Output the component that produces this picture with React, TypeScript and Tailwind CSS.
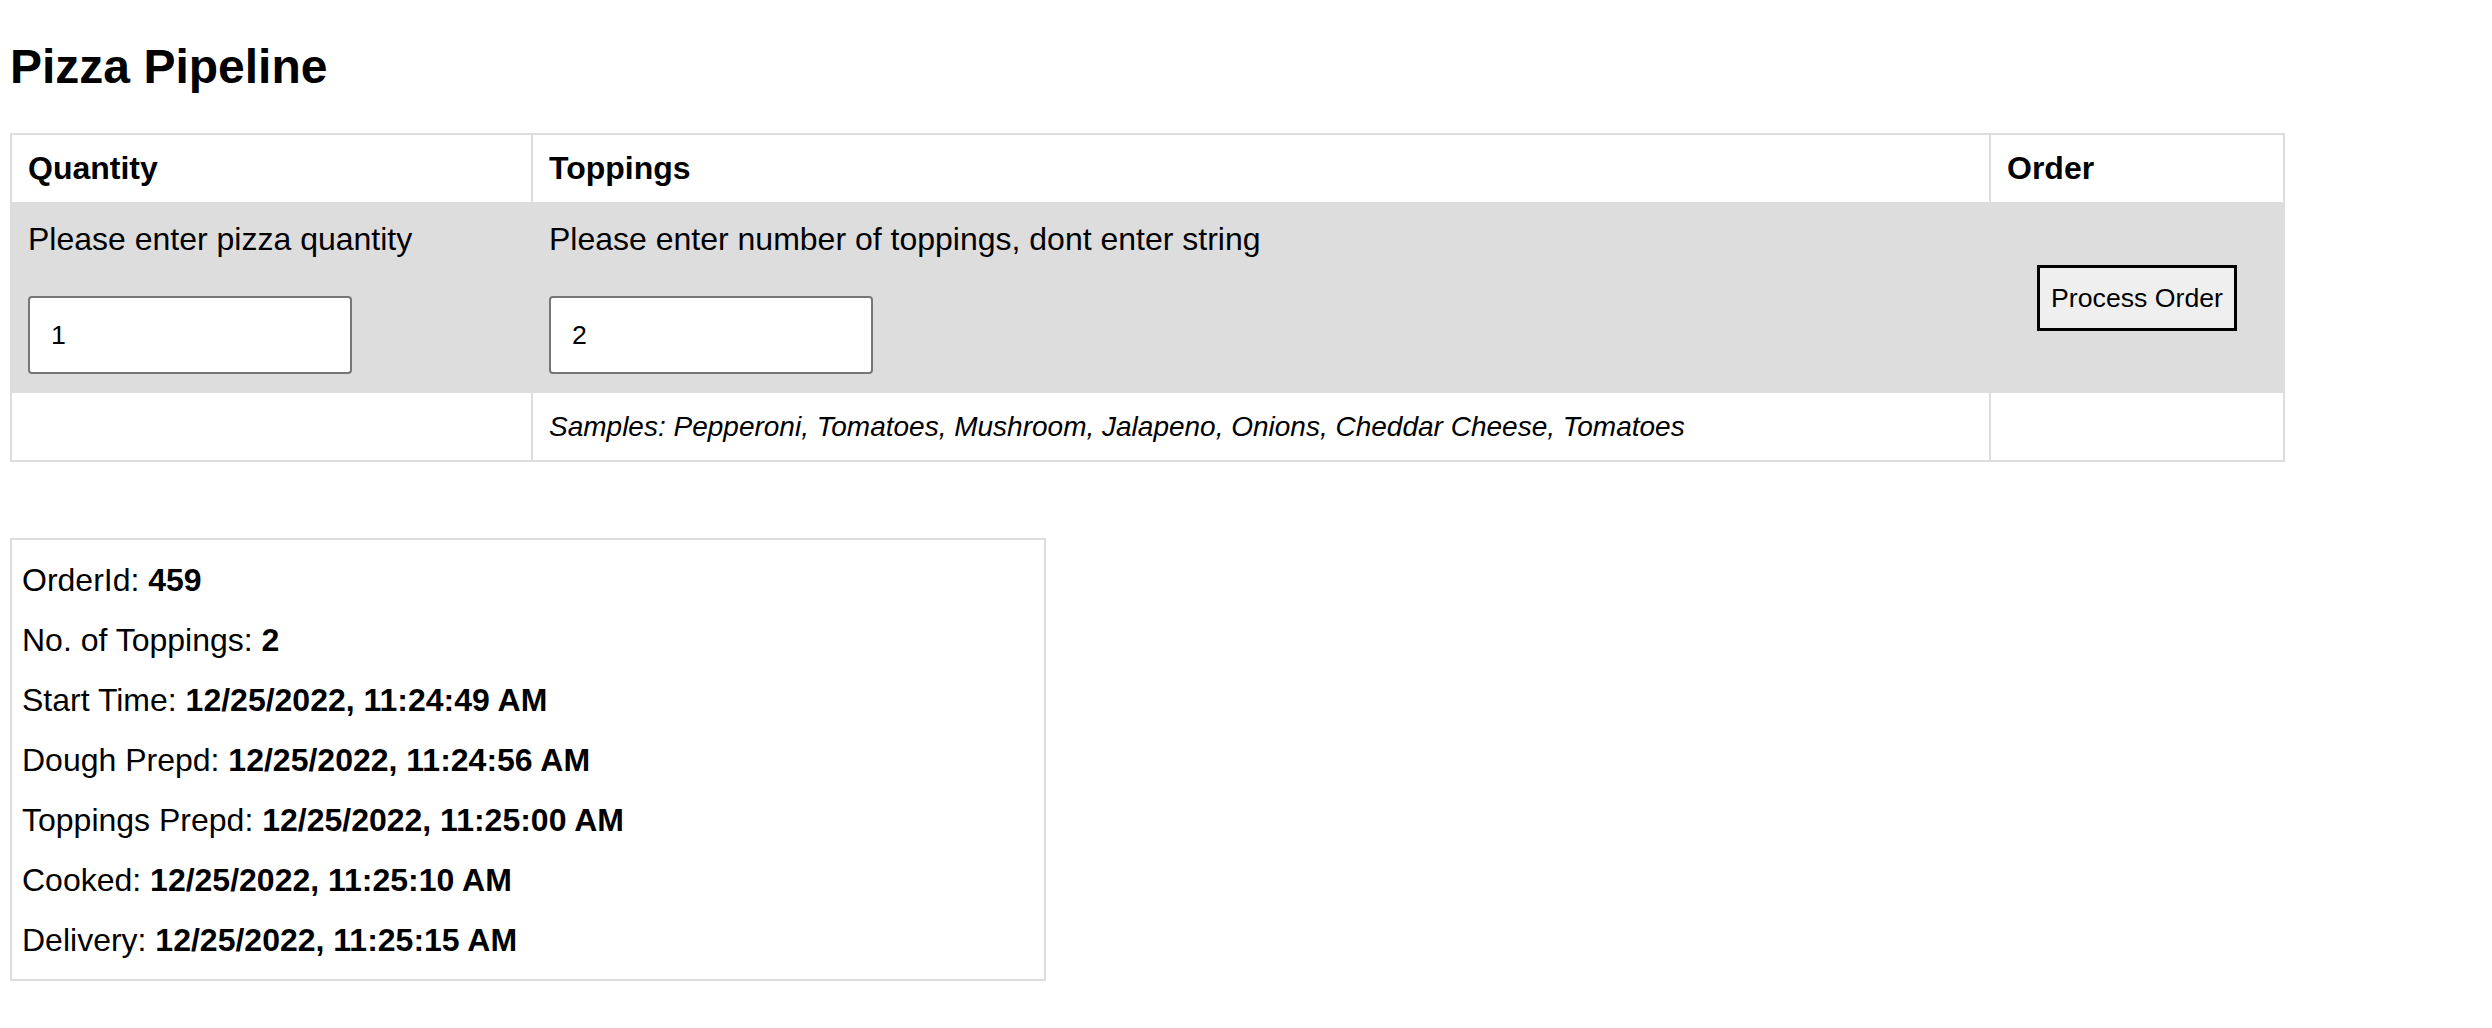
import { useState } from "react";

// Pizza Pipeline — order form table on top, timeline of the last order below.

const FONT = "font-['Liberation_Sans',Arial,sans-serif]";

const SAMPLES =
  "Samples: Pepperoni, Tomatoes, Mushroom, Jalapeno, Onions, Cheddar Cheese, Tomatoes";

type Step = { label: string; value: string };

const lastOrder: Step[] = [
  { label: "OrderId", value: "459" },
  { label: "No. of Toppings", value: "2" },
  { label: "Start Time", value: "12/25/2022, 11:24:49 AM" },
  { label: "Dough Prepd", value: "12/25/2022, 11:24:56 AM" },
  { label: "Toppings Prepd", value: "12/25/2022, 11:25:00 AM" },
  { label: "Cooked", value: "12/25/2022, 11:25:10 AM" },
  { label: "Delivery", value: "12/25/2022, 11:25:15 AM" },
];

function NumberField({
  value,
  onChange,
}: {
  value: string;
  onChange: (v: string) => void;
}) {
  return (
    <input
      type="text"
      value={value}
      onChange={(e) => onChange(e.target.value)}
      className={`${FONT} mt-[38px] block h-[78px] w-[324px] rounded-[4px] border-2 border-[#767676] bg-white pl-[21px] text-[26.67px] text-black outline-none`}
    />
  );
}

export default function App() {
  const [quantity, setQuantity] = useState("1");
  const [toppings, setToppings] = useState("2");

  return (
    <div className={`${FONT} min-h-screen bg-white px-[10px] pt-[39px] text-black`}>
      <h1 className="text-[48px] font-bold leading-[55px]">Pizza Pipeline</h1>

      <div className="mt-[39px] grid w-[2275px] grid-cols-[519px_1456px_292px] gap-[2px] bg-[#ddd] p-[2px]">
        {/* header */}
        <div className="bg-white px-[16px] py-[15px] text-[32px] font-bold leading-[37px]">
          Quantity
        </div>
        <div className="bg-white px-[16px] py-[15px] text-[32px] font-bold leading-[37px]">
          Toppings
        </div>
        <div className="bg-white px-[16px] py-[15px] text-[32px] font-bold leading-[37px]">
          Order
        </div>

        {/* inputs */}
        <div className="bg-[#ddd] px-[16px] pb-[17px] pt-[17px]">
          <div className="text-[32px] leading-[37px]">Please enter pizza quantity</div>
          <NumberField value={quantity} onChange={setQuantity} />
        </div>
        <div className="bg-[#ddd] px-[16px] pb-[17px] pt-[17px]">
          <div className="text-[32px] leading-[37px]">
            Please enter number of toppings, dont enter string
          </div>
          <NumberField value={toppings} onChange={setToppings} />
        </div>
        <div className="flex items-center justify-center bg-[#ddd]">
          <button
            type="button"
            className={`${FONT} h-[66px] w-[200px] border-[3px] border-black bg-[#efefef] text-[26.67px] text-black`}
          >
            Process Order
          </button>
        </div>

        {/* samples */}
        <div className="bg-white" />
        <div className="bg-white px-[16px] pb-[17px] pt-[18px] text-[28px] italic leading-[32px]">
          {SAMPLES}
        </div>
        <div className="bg-white" />
      </div>

      <div className="mt-[76px] w-[1036px] border-2 border-[#ddd] px-[10px] pb-[9px] pt-[10px] text-[32px] leading-[60px]">
        {lastOrder.map((step) => (
          <div key={step.label}>
            {step.label}: <span className="font-bold">{step.value}</span>
          </div>
        ))}
      </div>
    </div>
  );
}
